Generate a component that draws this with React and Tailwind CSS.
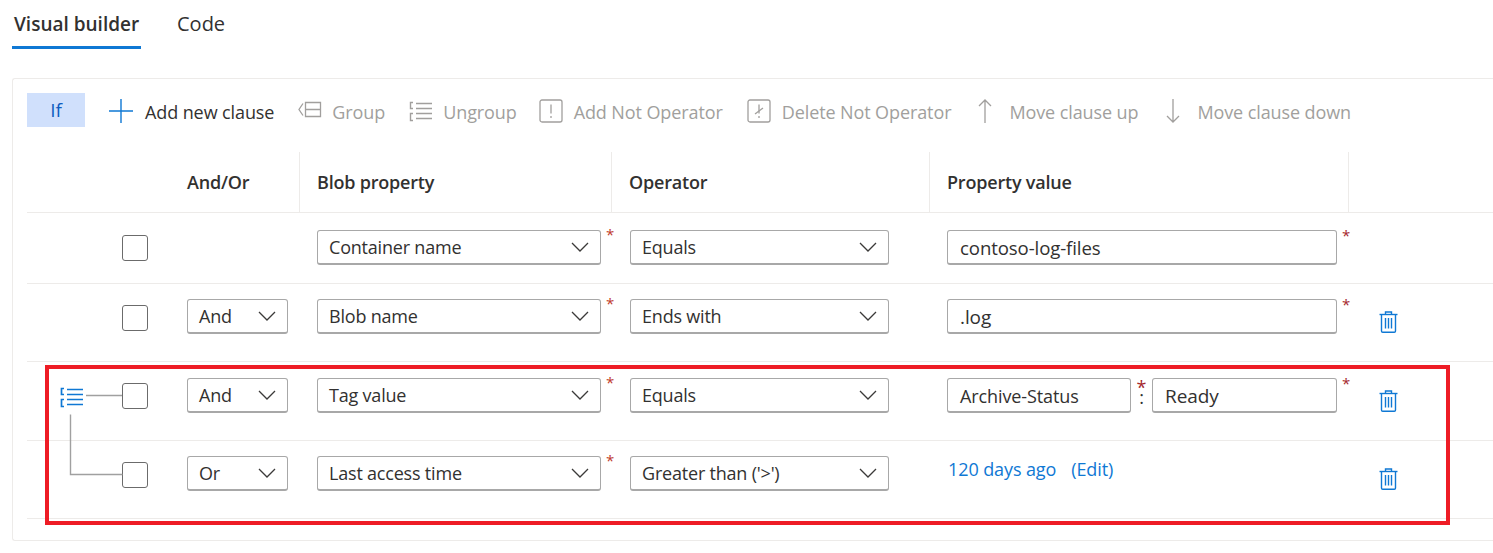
import React from 'react';

const BLUE = '#0f78d4';

function Chevron() {
  return (
    <svg width="18" height="10" viewBox="0 0 18 10" fill="none" stroke="#3b3a39" strokeWidth="1.3">
      <path d="M1 1l8 8 8-8" />
    </svg>
  );
}

function Select({ value, width }) {
  return (
    <div className={`${width} h-[35px] shrink-0 flex items-center justify-between pl-[11px] pr-[11px] bg-white border border-[#a8a8a8] rounded-[3px] border-b-2`}>
      <span className="text-[18px] leading-none text-[#323130] tracking-[-0.2px]">{value}</span>
      <Chevron />
    </div>
  );
}

function TextBox({ value, width, size = 'text-[18px]' }) {
  return (
    <div className={`${width} h-[35px] shrink-0 flex items-center pl-3 bg-white border border-[#a8a8a8] rounded-[3px] border-b-2`}>
      <span className={`${size} leading-none pt-0.5 text-[#323130]`}>{value}</span>
    </div>
  );
}

function Star({ className = '' }) {
  return <span className={`text-[15px] leading-none text-[#a4262c] ${className}`}>*</span>;
}

function Trash() {
  return (
    <svg width="19" height="22" viewBox="0 0 19 22" fill="none" stroke={BLUE} strokeWidth="1.4">
      <path d="M0.5 3.5h18" />
      <path d="M6.5 3.5V1h6v2.5" />
      <path d="M2.5 3.5V20a1.2 1.2 0 0 0 1.2 1.2h11.6a1.2 1.2 0 0 0 1.2-1.2V3.5" />
      <path d="M6.5 7v10.5M9.5 7v10.5M12.5 7v10.5" />
    </svg>
  );
}

function Checkbox() {
  return <div className="w-[26px] h-[26px] rounded-[3px] border border-[#6b6b6b] bg-white" />;
}

function GroupIcon() {
  return (
    <svg width="24" height="20" viewBox="0 0 24 20" fill="none" stroke="#a19f9d" strokeWidth="1.3">
      <path d="M5 2.5L1 8.5l4 6" />
      <path d="M7.5 1.5h15v14h-15zM7.5 8.5h15" />
    </svg>
  );
}

function UngroupIcon({ color = '#a19f9d', weight = 1.4 }) {
  return (
    <svg width="24" height="21" viewBox="0 0 24 21" fill="none" stroke={color} strokeWidth={weight}>
      <path d="M4 1.5H1.5v6H4M4 12.5H1.5v7H4" />
      <path d="M7 2.5h16M7 7.5h16M7 12.5h16M7 17.5h16" />
    </svg>
  );
}

function NotIcon({ slashed }) {
  return (
    <svg width="24" height="24" viewBox="0 0 24 24" fill="none" stroke="#a19f9d" strokeWidth="1.3">
      <rect x="1" y="1" width="22" height="22" rx="2" />
      <path d="M12 5.5v9M12 17v2" />
      {slashed && <path d="M8 15l8-6" />}
    </svg>
  );
}

function PlusIcon() {
  return (
    <svg width="24" height="24" viewBox="0 0 24 24" fill="none" stroke={BLUE} strokeWidth="1.4">
      <path d="M12 0v24M0 12h24" />
    </svg>
  );
}

function ArrowIcon({ down }) {
  return (
    <svg width="14" height="24" viewBox="0 0 14 24" fill="none" stroke="#a19f9d" strokeWidth="1.3">
      {down ? <path d="M7 0v23M1 17l6 6 6-6" /> : <path d="M7 24V1M1 7l6-6 6 6" />}
    </svg>
  );
}

function ToolItem({ icon, label, className = '', active }) {
  return (
    <div className={`flex items-center shrink-0 h-6 mt-[6px] ${className}`}>
      {icon}
      <span className={`text-[18px] leading-none pt-0.5 ${active ? 'text-[#323130]' : 'text-[#a19f9d]'}`}>{label}</span>
    </div>
  );
}

const gridCols = 'grid grid-cols-[142px_130px_312px_318px_419px_1fr]';

function HeaderCell({ children, border = true }) {
  return (
    <div className={`h-[60px] flex items-center text-[18px] font-semibold tracking-[-0.2px] text-[#323130] ${border ? 'pl-[17px] border-l border-[#edebe9]' : 'pl-[18px]'}`}>
      {children}
    </div>
  );
}

function Row({ height, pad, checkPad, trashPad, lead, join, prop, op, value, trash = true }) {
  return (
    <div className={`${gridCols} ${height} border-b border-[#edebe9]`}>
      <div className={`flex justify-end pr-[21px] ${checkPad}`}>
        <div className="relative">
          {lead}
          <Checkbox />
        </div>
      </div>
      <div className={`pl-[18px] ${pad}`}>{join && <Select value={join} width="w-[101px]" />}</div>
      <div className={`pl-[18px] flex items-start ${pad}`}>
        <Select value={prop} width="w-[284px]" />
        <Star className="ml-[5px] mt-[-3px] text-[11px] text-[#c0392b]" />
      </div>
      <div className={`pl-[19px] ${pad}`}>
        <Select value={op} width="w-[259px]" />
      </div>
      <div className={`pl-[18px] flex items-start ${pad}`}>{value}</div>
      <div className={`pl-[31px] ${trashPad}`}>{trash && <Trash />}</div>
    </div>
  );
}

export default function App() {
  return (
    <div className="w-[1493px] h-[553px] overflow-hidden bg-white font-['Open_Sans',sans-serif] tracking-[-0.1px]">
      <div className="h-[78px] pl-3 flex items-start tracking-normal">
        <div className="w-[129px] h-[49px] pl-0.5 pt-[11px] border-b-[3px] border-[#0f78d4] text-[19px] leading-[26px] font-semibold text-[#323130]">
          Visual builder
        </div>
        <div className="ml-[36px] pt-[11px] text-[20px] leading-[26px] text-[#323130]">Code</div>
      </div>

      <div className="relative h-[463px] ml-3 pl-[14px] border border-r-0 border-[#edebe9] rounded-l-[3px]">
        <div className="h-[73px] pt-[14px] flex items-start">
          <div className="w-[58px] h-[34px] flex items-center justify-center bg-[#d0e0fc] text-[19px] text-[#0f5cc0]">If</div>
          <ToolItem className="ml-[24px] gap-3" active icon={<PlusIcon />} label="Add new clause" />
          <ToolItem className="ml-[24px] gap-[10px]" icon={<GroupIcon />} label="Group" />
          <ToolItem className="ml-[24px] gap-[10px]" icon={<UngroupIcon />} label="Ungroup" />
          <ToolItem className="ml-[22px] gap-[11px]" icon={<NotIcon />} label="Add Not Operator" />
          <ToolItem className="ml-[24px] gap-[11px]" icon={<NotIcon slashed />} label="Delete Not Operator" />
          <ToolItem className="ml-[27px] gap-[17px]" icon={<ArrowIcon />} label="Move clause up" />
          <ToolItem className="ml-[28px] gap-[17px]" icon={<ArrowIcon down />} label="Move clause down" />
        </div>

        <div className={`${gridCols} border-b border-[#edebe9]`}>
          <HeaderCell border={false} />
          <HeaderCell border={false}>And/Or</HeaderCell>
          <HeaderCell>Blob property</HeaderCell>
          <HeaderCell>Operator</HeaderCell>
          <HeaderCell>Property value</HeaderCell>
          <HeaderCell />
        </div>

        <Row
          height="h-[71px]"
          pad="pt-[17px]"
          checkPad="pt-[22px]"
          trashPad="pt-[27px]"
          prop="Container name"
          op="Equals"
          trash={false}
          value={
            <>
              <TextBox value="contoso-log-files" width="w-[390px]" size="text-[18.6px]" />
              <Star className="ml-[5px] -mt-0.5" />
            </>
          }
        />
        <Row
          height="h-[78px]"
          pad="pt-[15px]"
          checkPad="pt-[21px]"
          trashPad="pt-[27px]"
          join="And"
          prop="Blob name"
          op="Ends with"
          value={
            <>
              <TextBox value=".log" width="w-[390px]" size="text-[19px]" />
              <Star className="ml-[5px] -mt-0.5" />
            </>
          }
        />
        <Row
          height="h-[79px]"
          pad="pt-[16px]"
          checkPad="pt-[21px]"
          trashPad="pt-[28px]"
          join="And"
          prop="Tag value"
          op="Equals"
          lead={
            <div className="absolute left-[-62px] top-[4px]">
              <UngroupIcon color={BLUE} weight={1.7} />
            </div>
          }
          value={
            <>
              <TextBox value="Archive-Status" width="w-[184px]" />
              <div className="w-[21px] shrink-0 flex flex-col items-center">
                <Star className="h-[10px] text-[18px] leading-[10px]" />
                <span className="h-[10px] mt-1 text-[18px] leading-[10px] text-[#323130]">:</span>
              </div>
              <TextBox value="Ready" width="w-[185px]" size="text-[19px]" />
              <Star className="ml-[5px] -mt-0.5 shrink-0" />
            </>
          }
        />
        <Row
          height="h-[78px]"
          pad="pt-[15px]"
          checkPad="pt-[21px]"
          trashPad="pt-[27px]"
          join="Or"
          prop="Last access time"
          op="Greater than ('>')"
          value={
            <div className="pl-px text-[18px] leading-[26px] text-[#0f78d4]">
              120 days ago<span className="ml-[15px]">(Edit)</span>
            </div>
          }
        />

        {/* tree lines between the grouped clauses */}
        <svg className="absolute left-[45px] top-[300px] pointer-events-none" width="80" height="110" fill="none" stroke="#a0a0a0" strokeWidth="1.4">
          <path d="M28 16.5h36M12.5 35.5v60h52" />
        </svg>

        {/* red highlight drawn on top of the screenshot */}
        <div className="absolute left-[32px] top-[286px] w-[1405px] h-[160px] border-4 border-[#ee1c25] pointer-events-none" />
      </div>
    </div>
  );
}
